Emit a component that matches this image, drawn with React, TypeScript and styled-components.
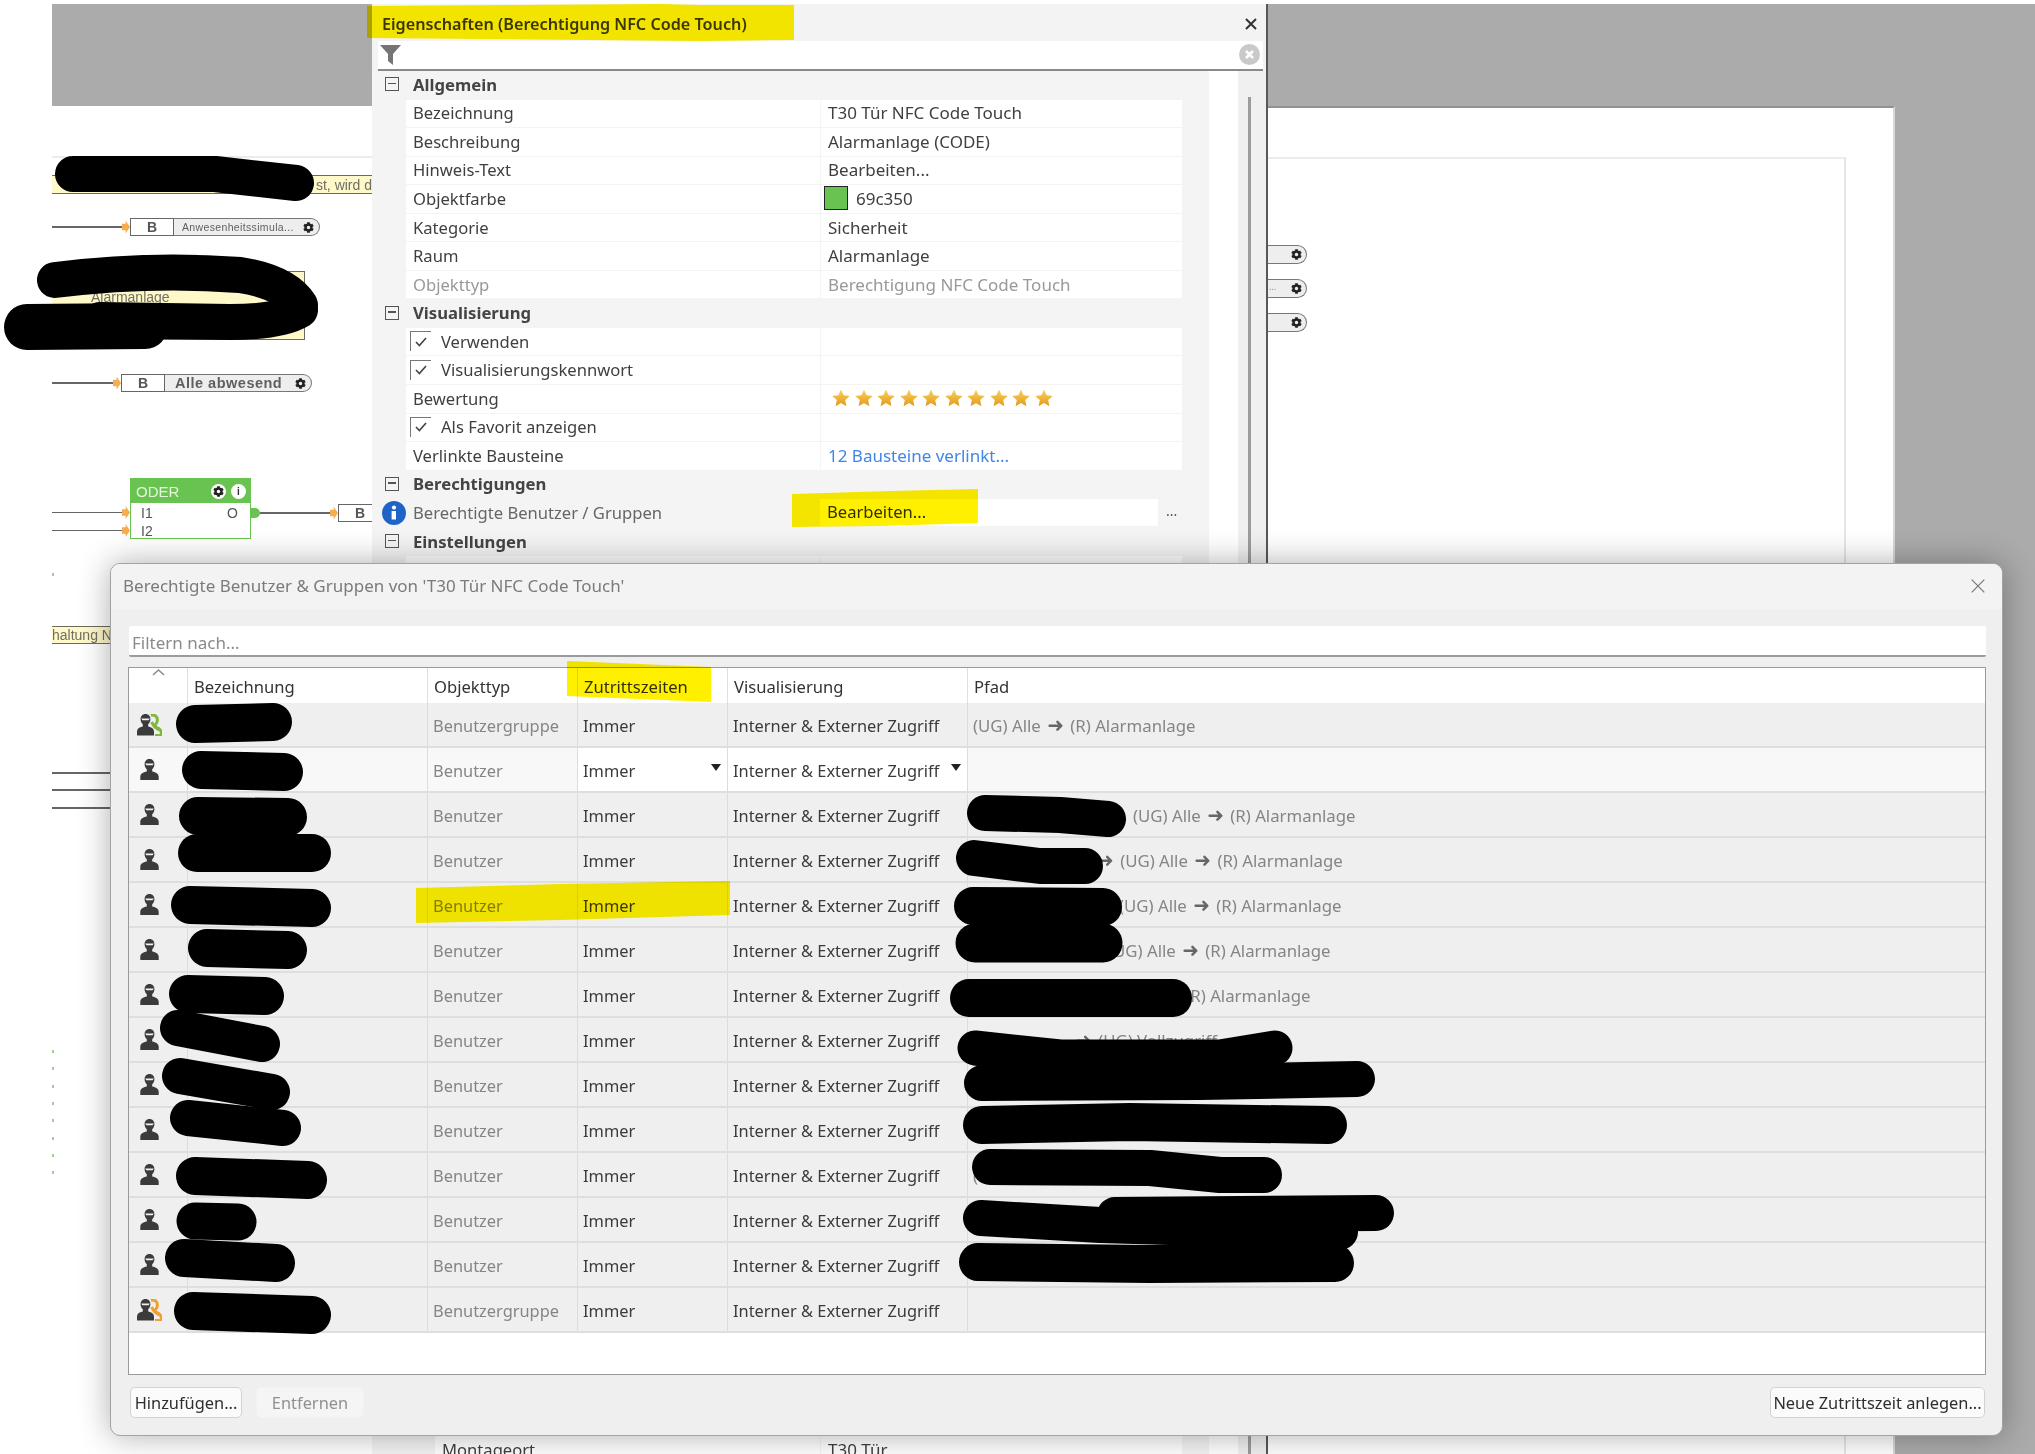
import React from 'react';
import styled, { createGlobalStyle } from 'styled-components';
import { FaCog } from 'react-icons/fa';

const UI_FONT = '"Noto Sans", "DejaVu Sans", sans-serif';

const GlobalStyle = createGlobalStyle`
  html, body {
    margin: 0;
    padding: 0;
    background: #fff;
  }
  body {
    width: 2035px;
    height: 1454px;
    overflow: hidden;
    font-family: ${UI_FONT};
    font-size: 16.4px;
    color: #333;
  }
  * { box-sizing: border-box; }
`;

const Page = styled.div`
  position: relative;
  width: 2035px;
  height: 1454px;
  overflow: hidden;
  background: #fff;
`;

const Desktop = styled.div`
  display: grid;
  grid-template-columns: 52px 320px 896px 767px;
  height: 1454px;
  padding-top: 4px;
`;

/* ---------- canvas behind the windows ---------- */

const Canvas = styled.div<{ $column: number }>`
  grid-column: ${(p) => p.$column};
  grid-row: 1;
  display: flex;
  align-items: stretch;
  padding-top: 102px;
  background: #ababab;
  overflow: hidden;
`;

const LeftPaper = styled.div`
  position: relative;
  flex: 1;
  background: #fff;
  padding-top: 50px;
`;

const RightPaper = styled.div`
  position: relative;
  width: 627px;
  background: #fff;
  border-top: 2px solid #919191;
  border-right: 2px solid #d8d8d8;
  padding: 49px 47px 0 0;
`;

const PrintFrame = styled.div<{ $right?: boolean }>`
  height: 100%;
  border-top: 2px solid #ececec;
  border-right: ${(p) => (p.$right ? '2px solid #e6e6e6' : 'none')};
`;

const Note = styled.div<{ $y: number; $w: number; $h: number; $start?: boolean; $pad?: number }>`
  position: absolute;
  left: 0;
  top: ${(p) => p.$y}px;
  width: ${(p) => p.$w}px;
  height: ${(p) => p.$h}px;
  padding: ${(p) => (p.$pad ? '17px' : '0')} 0 0 ${(p) => p.$pad ?? 0}px;
  display: flex;
  justify-content: ${(p) => (p.$start ? 'flex-start' : 'flex-end')};
  align-items: ${(p) => (p.$pad ? 'flex-start' : 'center')};
  background: #fff8c9;
  border: 1.5px solid #6b6b5c;
  border-right-width: ${(p) => (p.$w >= 320 ? 0 : 1.5)}px;
  border-left-width: 0;
  font-family: "Liberation Sans", sans-serif;
  font-size: 14px;
  color: #6f6f66;
  white-space: nowrap;
  overflow: hidden;
`;

const Chain = styled.div<{ $x: number; $y: number }>`
  position: absolute;
  left: ${(p) => p.$x}px;
  top: ${(p) => p.$y}px;
  display: flex;
  align-items: center;
`;

const Wire = styled.span<{ $w: number }>`
  display: block;
  width: ${(p) => p.$w}px;
  height: 1.5px;
  background: #666;
`;

const PinIn = styled.span`
  display: block;
  width: 8px;
  height: 13px;
  background: #f6ac52;
  clip-path: polygon(0 25%, 45% 25%, 45% 0, 100% 50%, 45% 100%, 45% 75%, 0 75%);
`;

const PinOut = styled.span`
  display: block;
  width: 9px;
  height: 10px;
  background: #69c350;
  border-radius: 0 5px 5px 0;
`;

const RefBox = styled.span<{ $w: number }>`
  display: flex;
  align-items: center;
  justify-content: center;
  width: ${(p) => p.$w}px;
  height: 18px;
  background: #fff;
  border: 1.5px solid #666;
  font-family: "Liberation Sans", sans-serif;
  font-weight: 700;
  font-size: 14px;
  color: #555;
`;

const RefLabel = styled.span<{ $w: number; $bold?: boolean }>`
  display: flex;
  align-items: center;
  justify-content: space-between;
  width: ${(p) => p.$w}px;
  height: 18px;
  padding: 0 5px 0 ${(p) => (p.$bold ? 10 : 8)}px;
  background: #eeeeee;
  border: 1.5px solid #777;
  border-left: 0;
  border-radius: 0 9px 9px 0;
  font-family: "Liberation Sans", sans-serif;
  font-weight: ${(p) => (p.$bold ? 700 : 400)};
  font-size: ${(p) => (p.$bold ? 14.5 : 10.5)}px;
  letter-spacing: ${(p) => (p.$bold ? 0.5 : 0.35)}px;
  color: #5f5f5f;
  white-space: nowrap;
`;

const Cog = styled(FaCog)`
  flex: none;
  width: 11px;
  height: 11px;
  color: #222;
`;

const LogicBlock = styled.div`
  position: absolute;
  left: 78px;
  top: 372px;
  width: 121px;
  height: 61px;
  background: #fff;
  border: 1.5px solid #69c350;
`;

const LogicHead = styled.div`
  display: flex;
  align-items: center;
  height: 24px;
  padding: 0 4px 0 5px;
  gap: 5px;
  background: #69c350;
  font-family: "Liberation Sans", sans-serif;
  font-weight: 400;
  font-size: 15px;
  color: #e6f5df;
`;

const LogicName = styled.span`
  flex: 1;
`;

const RoundBadge = styled.span`
  display: flex;
  align-items: center;
  justify-content: center;
  width: 15px;
  height: 15px;
  border-radius: 50%;
  background: #fff;
  font-size: 10px;
  font-weight: 700;
  color: #333;
`;

const LogicPorts = styled.div`
  display: grid;
  grid-template-columns: 1fr auto;
  padding: 2px 12px 0 10px;
  font-family: "Liberation Sans", sans-serif;
  font-size: 14px;
  line-height: 17.5px;
  color: #555;
`;

const GraphDot = styled.span<{ $y: number }>`
  position: absolute;
  left: 0;
  top: ${(p) => p.$y}px;
  width: 2px;
  height: 3px;
  background: #9fd08d;
`;

const Stub = styled.div<{ $y: number }>`
  position: absolute;
  left: 0;
  top: ${(p) => p.$y}px;
  display: flex;
  align-items: center;
  justify-content: space-between;
  width: 39px;
  height: 19px;
  padding: 0 4px 4px 1px;
  background: #eee;
  border: 1.5px solid #777;
  border-left: 0;
  border-radius: 0 10px 10px 0;
  font-size: 9px;
  color: #8a8a8a;
  ${Cog} { margin-top: 4px; margin-left: auto; }
`;

/* ---------- properties window ---------- */

const PropsWindow = styled.section`
  grid-column: 3;
  grid-row: 1;
  display: flex;
  flex-direction: column;
  height: 1450px;
  overflow: hidden;
  background: #f3f3f3;
  border-right: 2px solid #585858;
`;

const PropsTitle = styled.header`
  display: flex;
  align-items: center;
  justify-content: space-between;
  flex: none;
  height: 37px;
  padding: 3px 9px 0 10px;
  font-weight: 600;
  font-size: 16.2px;
  color: #3a3a3a;
`;

const CloseGlyph = styled.svg`
  width: 12px;
  height: 12px;
  stroke: #333;
  stroke-width: 2;
`;

const FilterBar = styled.div`
  display: flex;
  align-items: center;
  justify-content: space-between;
  flex: none;
  height: 30px;
  margin-left: 6px;
  margin-right: 3px;
  padding: 0 3px 1px 2px;
  background: #fff;
  border-bottom: 2px solid #8a8a8a;
`;

const PropsBody = styled.div`
  display: flex;
  flex: 1;
  min-height: 0;
`;

const PropsGrid = styled.div`
  flex: none;
  width: 837px;
  padding-right: 27px;
  background: #f4f4f4;
  font-size: 16.6px;
`;

const WhiteGap = styled.div`
  flex: none;
  width: 29px;
  background: #fff;
`;

const ScrollTrack = styled.div`
  flex: 1;
  display: flex;
  justify-content: center;
  padding: 26px 5px 0 0;
  background: #f0f0f0;
`;

const ScrollThumb = styled.div`
  width: 3px;
  height: 100%;
  background: #9c9c9c;
`;

const SectionRow = styled.div`
  display: flex;
  align-items: center;
  height: 28.55px;
  padding: 0 0 2px 13px;
  font-weight: 700;
  font-size: 16.7px;
  color: #444;
`;

const Toggle = styled.span`
  position: relative;
  flex: none;
  width: 14px;
  height: 14px;
  margin-right: 14px;
  border: 1.5px solid #555;
  &::after {
    content: '';
    position: absolute;
    left: 2px;
    right: 2px;
    top: 4.5px;
    height: 1.5px;
    background: #555;
  }
`;

const PropRow = styled.div<{ $bare?: boolean; $indent?: number }>`
  display: grid;
  grid-template-columns: ${(p) => 414 - (p.$indent ?? 0)}px 1fr;
  height: 28.55px;
  margin-left: ${(p) => 34 + (p.$indent ?? 0)}px;
  background: ${(p) => (p.$bare ? 'transparent' : '#fff')};
  border-bottom: ${(p) => (p.$bare ? 'none' : '1px solid #f4f4f4')};
`;

const PropLabel = styled.div<{ $muted?: boolean; $tone?: string }>`
  display: flex;
  align-items: center;
  padding: 0 0 1px 7px;
  color: ${(p) => p.$tone ?? (p.$muted ? '#999' : '#3f3f3f')};
  white-space: nowrap;
`;

const CheckBox = styled.span`
  display: flex;
  align-items: center;
  justify-content: center;
  flex: none;
  width: 21px;
  height: 20px;
  margin: 0 10px 0 -3px;
  border-top: 1.5px solid #777;
  border-left: 1.5px solid #777;
`;

const PropValue = styled.div<{ $muted?: boolean; $link?: boolean }>`
  display: flex;
  align-items: center;
  gap: 6px;
  padding: 0 0 1px 7px;
  border-left: 1px solid #f4f4f4;
  font-size: 17px;
  color: ${(p) => (p.$link ? '#3f86e8' : p.$muted ? '#999' : '#3f3f3f')};
  white-space: nowrap;
`;

const Swatch = styled.span<{ $color: string }>`
  width: 24px;
  height: 24px;
  margin-left: -4px;
  margin-right: 2px;
  background: ${(p) => p.$color};
  border: 1.5px solid #222;
`;

const Stars = styled.div`
  display: flex;
  gap: 4.5px;
  margin-left: 4px;
`;

const EditCell = styled.div`
  display: flex;
  align-items: flex-start;
`;

const EditField = styled.div`
  display: flex;
  align-items: center;
  width: 338px;
  height: 27px;
  padding: 0 0 2px 7px;
  background: #fff;
  font-size: 16.6px;
  color: #333;
`;

const EditDots = styled.span`
  margin-left: 8px;
  margin-top: 2px;
  font-size: 14px;
  color: #555;
`;

const HiddenRows = styled.div`
  height: 851px;
`;

/* ---------- dialog ---------- */

const Dialog = styled.section`
  position: absolute;
  left: 110px;
  top: 563px;
  width: 1893px;
  height: 873px;
  display: flex;
  flex-direction: column;
  background: #efefef;
  border: 1.5px solid #a3a3a3;
  border-radius: 10px;
  box-shadow: 0 0 32px rgba(0, 0, 0, 0.32);
  overflow: hidden;
`;

const DialogTitle = styled.header`
  display: flex;
  align-items: center;
  justify-content: space-between;
  flex: none;
  height: 45px;
  padding: 0 17px 2px 12px;
  background: #f3f3f3;
  color: #7b7b7b;
  font-size: 17px;
`;

const DialogBody = styled.div`
  display: flex;
  flex: 1;
  flex-direction: column;
  padding: 17px 16px 16px 17px;
`;

const FilterInput = styled.div`
  display: flex;
  align-items: center;
  flex: none;
  height: 31px;
  margin: 0 0 10px 1px;
  padding: 4px 3px 0;
  background: #fff;
  border-bottom: 2px solid #9b9b9b;
  border-radius: 2px;
  font-size: 17px;
  color: #8a8a8a;
`;

const Table = styled.div`
  flex: none;
  display: flex;
  flex-direction: column;
  height: 708px;
  background: #fff;
  border: 1.5px solid #9a9a9a;
`;

const TableHead = styled.div`
  display: grid;
  grid-template-columns: 58px 240px 150px 150px 240px 1fr;
  flex: none;
  height: 35px;
`;

const HeadCell = styled.div`
  display: flex;
  align-items: center;
  padding: 2px 0 0 6px;
  border-left: 1px solid #e0e0e0;
  font-size: 16.6px;
  color: #333;
  &:first-child {
    border-left: 0;
    align-items: flex-start;
    justify-content: center;
    padding: 1px 0 0;
  }
`;

const TableRow = styled.div`
  display: grid;
  grid-template-columns: 58px 240px 150px 150px 240px 1fr;
  flex: none;
  height: 45px;
  border-bottom: 2px solid #dedede;
`;

const Cell = styled.div<{ $tone?: string; $bg?: string }>`
  display: flex;
  align-items: center;
  justify-content: space-between;
  padding: 2px 6px 0 5px;
  background: ${(p) => p.$bg ?? '#efefef'};
  border-left: 1.5px solid #dcdcdc;
  color: ${(p) => p.$tone ?? '#3a3a3a'};
  white-space: nowrap;
  &:first-child {
    justify-content: center;
    padding: 0 17px 0 0;
    border-left: 0;
  }
`;

const PathText = styled.span<{ $indent: number }>`
  margin-left: ${(p) => p.$indent}px;
  font-size: 16.8px;
`;

const PathArrow = styled.span`
  margin: 0 2px;
  font-family: "DejaVu Sans", sans-serif;
  font-size: 20px;
  line-height: 1;
  color: #666;
`;

const DropCaret = styled.span`
  width: 0;
  height: 0;
  margin-bottom: 6px;
  border-left: 5px solid transparent;
  border-right: 5px solid transparent;
  border-top: 7px solid #222;
`;

const DialogFooter = styled.footer`
  display: flex;
  align-items: center;
  gap: 14px;
  margin-top: 12px;
  padding-left: 2px;
  padding-right: 1px;
`;

const FooterButton = styled.div<{ $disabled?: boolean; $w: number; $push?: boolean }>`
  display: flex;
  align-items: center;
  justify-content: center;
  width: ${(p) => p.$w}px;
  height: 31px;
  margin-left: ${(p) => (p.$push ? 'auto' : 0)};
  background: ${(p) => (p.$disabled ? '#f5f5f5' : '#fbfbfb')};
  border: 1.5px solid ${(p) => (p.$disabled ? '#f2f2f2' : '#d2d2d2')};
  border-radius: 5px;
  color: ${(p) => (p.$disabled ? '#909090' : '#2e2e2e')};
  white-space: nowrap;
`;

const MarkerLayer = styled.svg`
  position: absolute;
  left: 0;
  top: 0;
  width: 2035px;
  height: 1454px;
  mix-blend-mode: multiply;
  pointer-events: none;
`;

const ScribbleLayer = styled.svg`
  position: absolute;
  left: 0;
  top: 0;
  width: 2035px;
  height: 1454px;
  pointer-events: none;
`;

/* ---------- small drawings ---------- */

const FilterFunnel = () => (
  <svg width="21" height="22" viewBox="0 0 21 22">
    <path d="M0 1H21L13 10V21L8 17V10Z" fill="#757575" />
  </svg>
);

const ClearCircle = () => (
  <svg width="21" height="21" viewBox="0 0 21 21">
    <circle cx="10.5" cy="10.5" r="10.5" fill="#c9c9c9" />
    <path d="M7 7L14 14M14 7L7 14" stroke="#fff" strokeWidth="2.6" />
  </svg>
);

const InfoDisc = () => (
  <svg width="24" height="24" viewBox="0 0 24 24" style={{ marginLeft: -31, marginRight: 7, flex: 'none' }}>
    <circle cx="12" cy="12" r="12" fill="#1f63c9" />
    <circle cx="12" cy="6.5" r="2.1" fill="#fff" />
    <path d="M9.6 10H14V18.5H9.6Z" fill="#fff" />
  </svg>
);

const Star = () => (
  <svg width="18" height="18" viewBox="0 0 18 18">
    <defs>
      <linearGradient id="star-fill" x1="0" y1="0" x2="0" y2="1">
        <stop offset="0" stopColor="#f9d25a" />
        <stop offset="1" stopColor="#e19a1c" />
      </linearGradient>
    </defs>
    <path d="M9 .6l2.6 5.6 6.1.7-4.5 4.2 1.2 6.1L9 13.9 3.6 17.2l1.2-6.1L.3 6.9l6.1-.7z" fill="url(#star-fill)" />
  </svg>
);

const TickMark = () => (
  <svg width="12" height="10" viewBox="0 0 12 10">
    <path d="M1 5l3.4 3.6L11 1" fill="none" stroke="#444" strokeWidth="1.6" />
  </svg>
);

const SortChevron = () => (
  <svg width="13" height="7" viewBox="0 0 13 7">
    <path d="M1 6L6.5 1L12 6" fill="none" stroke="#8c8c8c" strokeWidth="1.5" />
  </svg>
);

const UserGlyph = () => (
  <svg width="19" height="21" viewBox="0 0 19 21">
    <path d="M9.5 0C6.5 0 4.6 2.2 4.6 5.2C4.6 7.3 5.4 9 6.8 10.2V12.4C3 13.2 .3 14.8 .3 17.5V21H18.7V17.5C18.7 14.8 16 13.2 12.2 12.4V10.2C13.6 9 14.4 7.3 14.4 5.2C14.4 2.2 12.5 0 9.5 0Z" fill="#3b3b3b" />
    <path d="M5.2 4.6H13.8L12.6 6.2H6.4Z" fill="#f2f2f2" />
  </svg>
);

const GroupGlyph = ({ accent }: { accent: string }) => (
  <svg width="25" height="22" viewBox="0 0 25 22">
    <path d="M14 1.5C17 .2 20.4 2.2 20.4 6C20.4 8.2 19.4 9.8 18.2 10.8V13C21.4 14 24.4 16 24.4 19V21.5H18" fill="none" stroke={accent} strokeWidth="3" />
    <path d="M14.5 8L17 12L22 16" fill="none" stroke={accent} strokeWidth="3" />
    <path d="M8.5 0C5.5 0 3.6 2.2 3.6 5.2C3.6 7.3 4.4 9 5.8 10.2V12.4C2 13.2 0 14.8 0 17.5V21.5H17V17.5C17 14.8 14.8 13.2 11.2 12.4V10.2C12.6 9 13.4 7.3 13.4 5.2C13.4 2.2 11.5 0 8.5 0Z" fill="#3b3b3b" />
    <path d="M4.2 4.6H12.8L11.6 6.2H5.4Z" fill="#f2f2f2" />
  </svg>
);

const CloseThin = () => (
  <svg width="14" height="14" viewBox="0 0 14 14">
    <path d="M.7 .7L13.3 13.3M13.3 .7L.7 13.3" stroke="#777" strokeWidth="1.2" />
  </svg>
);

/* ---------- data ---------- */

const ARROW = '\u279C';

type MemberRow = {
  icon: 'user' | 'green' | 'orange';
  kind: string;
  path?: { text: string; indent: number };
  editing?: boolean;
};

const ALARM_PATH = '(UG) Alle | (R) Alarmanlage';

const members: MemberRow[] = [
  { icon: 'green', kind: 'Benutzergruppe', path: { text: ALARM_PATH, indent: 0 } },
  { icon: 'user', kind: 'Benutzer', editing: true },
  { icon: 'user', kind: 'Benutzer', path: { text: ALARM_PATH, indent: 160 } },
  { icon: 'user', kind: 'Benutzer', path: { text: '| ' + ALARM_PATH, indent: 122 } },
  { icon: 'user', kind: 'Benutzer', path: { text: ALARM_PATH, indent: 146 } },
  { icon: 'user', kind: 'Benutzer', path: { text: ALARM_PATH, indent: 135 } },
  { icon: 'user', kind: 'Benutzer', path: { text: ALARM_PATH, indent: 115 } },
  { icon: 'user', kind: 'Benutzer', path: { text: '| (UG) Vollzugriff', indent: 100 } },
  { icon: 'user', kind: 'Benutzer' },
  { icon: 'user', kind: 'Benutzer' },
  { icon: 'user', kind: 'Benutzer', path: { text: '(UG)', indent: 0 } },
  { icon: 'user', kind: 'Benutzer' },
  { icon: 'user', kind: 'Benutzer' },
  { icon: 'orange', kind: 'Benutzergruppe' },
];

const GENERAL_ROWS: { label: string; value: string }[] = [
  { label: 'Bezeichnung', value: 'T30 Tür NFC Code Touch' },
  { label: 'Beschreibung', value: 'Alarmanlage (CODE)' },
  { label: 'Hinweis-Text', value: 'Bearbeiten...' },
];

const SCRIBBLES: { d: string; w: number }[] = [
  { d: 'M73 174 L215 174 L296 183', w: 36 },
  { d: 'M55 280 Q150 268 240 275 Q285 282 300 305', w: 36 },
  { d: 'M300 310 Q280 322 230 322 L100 320', w: 36 },
  { d: 'M27 327 L145 326', w: 46 },
  { d: 'M195 724 L273 722', w: 38 },
  { d: 'M201 770 L284 772', w: 38 },
  { d: 'M198 816 L288 817', w: 38 },
  { d: 'M197 853 L312 853', w: 38 },
  { d: 'M190 905 L312 908', w: 38 },
  { d: 'M207 948 L288 950', w: 38 },
  { d: 'M188 994 L265 996', w: 38 },
  { d: 'M178 1028 L262 1044', w: 36 },
  { d: 'M180 1076 L272 1092', w: 36 },
  { d: 'M188 1118 L283 1128', w: 36 },
  { d: 'M195 1176 L308 1180', w: 38 },
  { d: 'M195 1221 L238 1222', w: 37 },
  { d: 'M184 1258 L276 1263', w: 38 },
  { d: 'M193 1311 L312 1315', w: 38 },
  { d: 'M985 813 L1060 815 L1108 819', w: 36 },
  { d: 'M974 858 L1040 866 L1085 866', w: 36 },
  { d: 'M973 906 L1103 907', w: 38 },
  { d: 'M975 943 L1103 943', w: 39 },
  { d: 'M969 998 L1173 998', w: 38 },
  { d: 'M975 1048 L1060 1057 L1220 1057 L1275 1048', w: 35 },
  { d: 'M982 1083 L1200 1082 L1357 1079', w: 36 },
  { d: 'M982 1125 L1130 1122 L1328 1125', w: 38 },
  { d: 'M990 1167 L1150 1168 L1220 1175 L1264 1175', w: 36 },
  { d: 'M1115 1215 L1376 1213', w: 36 },
  { d: 'M981 1218 L1100 1225 L1340 1232', w: 36 },
  { d: 'M978 1262 L1150 1264 L1335 1263', w: 38 },
];

const MARKERS = [
  'M367 6 L660 4 L700 5 L794 5 L794 40 L700 41 L367 38 Z',
  'M792 494 L890 491 L978 489 L978 523 L880 526 L792 527 Z',
  'M567 661 L711 667 L711 702 L567 696 Z',
  'M416 888 L560 884 L730 881 L730 915 L560 920 L416 923 Z',
];

const MemberIcon = ({ icon }: { icon: MemberRow['icon'] }) => {
  if (icon === 'user') return <UserGlyph />;
  return <GroupGlyph accent={icon === 'green' ? '#7fb73f' : '#f0a030'} />;
};

const PathLabel = ({ text }: { text: string }) => {
  const parts = text.split('|');
  return (
    <>
      {parts.map((part, i) => (
        <React.Fragment key={i}>
          {i > 0 && <PathArrow>{ARROW}</PathArrow>}
          {part}
        </React.Fragment>
      ))}
    </>
  );
};

const App = () => {
  return (
    <Page>
      <GlobalStyle />
      <Desktop>
        <Canvas $column={2}>
          <LeftPaper>
            <PrintFrame />
            <Note $y={69} $w={320} $h={19}>st, wird d</Note>
            <Chain $x={0} $y={112}>
              <Wire $w={70} />
              <PinIn />
              <RefBox $w={44}>B</RefBox>
              <RefLabel $w={146}>Anwesenheitssimula...<Cog /></RefLabel>
            </Chain>
            <Note $y={165} $w={253} $h={69} $start $pad={39}>Alarmanlage</Note>
            <Chain $x={0} $y={268}>
              <Wire $w={61} />
              <PinIn />
              <RefBox $w={44}>B</RefBox>
              <RefLabel $w={147} $bold>Alle abwesend<Cog /></RefLabel>
            </Chain>
            <Chain $x={0} $y={400}>
              <Wire $w={70} />
              <PinIn />
            </Chain>
            <Chain $x={0} $y={418}>
              <Wire $w={70} />
              <PinIn />
            </Chain>
            <LogicBlock>
              <LogicHead>
                <LogicName>ODER</LogicName>
                <RoundBadge><Cog /></RoundBadge>
                <RoundBadge>i</RoundBadge>
              </LogicHead>
              <LogicPorts>
                <span>I1</span>
                <span>O</span>
                <span>I2</span>
              </LogicPorts>
            </LogicBlock>
            <Chain $x={199} $y={398}>
              <PinOut />
              <Wire $w={70} />
              <PinIn />
              <RefBox $w={44}>B</RefBox>
            </Chain>
            <Note $y={520} $w={320} $h={18} $start>haltung Nachricht</Note>
            <Chain $x={0} $y={666}><Wire $w={58} /></Chain>
            <Chain $x={0} $y={683}><Wire $w={58} /></Chain>
            <Chain $x={0} $y={701}><Wire $w={58} /></Chain>
            <GraphDot $y={467} />
            {[944, 961, 979, 996, 1013, 1031, 1048, 1065].map((y) => (
              <GraphDot key={y} $y={y} />
            ))}
          </LeftPaper>
        </Canvas>

        <PropsWindow>
          <PropsTitle>
            Eigenschaften (Berechtigung NFC Code Touch)
            <CloseGlyph viewBox="0 0 12 12">
              <path d="M1 1L11 11M11 1L1 11" />
            </CloseGlyph>
          </PropsTitle>
          <FilterBar>
            <FilterFunnel />
            <ClearCircle />
          </FilterBar>
          <PropsBody>
            <PropsGrid>
              <SectionRow><Toggle />Allgemein</SectionRow>
              {GENERAL_ROWS.map((row) => (
                <PropRow key={row.label}>
                  <PropLabel>{row.label}</PropLabel>
                  <PropValue>{row.value}</PropValue>
                </PropRow>
              ))}
              <PropRow>
                <PropLabel>Objektfarbe</PropLabel>
                <PropValue><Swatch $color="#69c350" />69c350</PropValue>
              </PropRow>
              <PropRow>
                <PropLabel>Kategorie</PropLabel>
                <PropValue>Sicherheit</PropValue>
              </PropRow>
              <PropRow>
                <PropLabel>Raum</PropLabel>
                <PropValue>Alarmanlage</PropValue>
              </PropRow>
              <PropRow>
                <PropLabel $muted>Objekttyp</PropLabel>
                <PropValue $muted>Berechtigung NFC Code Touch</PropValue>
              </PropRow>

              <SectionRow><Toggle />Visualisierung</SectionRow>
              <PropRow>
                <PropLabel><CheckBox><TickMark /></CheckBox>Verwenden</PropLabel>
                <PropValue />
              </PropRow>
              <PropRow>
                <PropLabel><CheckBox><TickMark /></CheckBox>Visualisierungskennwort</PropLabel>
                <PropValue />
              </PropRow>
              <PropRow>
                <PropLabel>Bewertung</PropLabel>
                <PropValue>
                  <Stars>
                    {Array.from({ length: 10 }, (_, i) => <Star key={i} />)}
                  </Stars>
                </PropValue>
              </PropRow>
              <PropRow>
                <PropLabel><CheckBox><TickMark /></CheckBox>Als Favorit anzeigen</PropLabel>
                <PropValue />
              </PropRow>
              <PropRow>
                <PropLabel>Verlinkte Bausteine</PropLabel>
                <PropValue $link>12 Bausteine verlinkt...</PropValue>
              </PropRow>

              <SectionRow><Toggle />Berechtigungen</SectionRow>
              <PropRow $bare>
                <PropLabel $tone="#666"><InfoDisc />Berechtigte Benutzer / Gruppen</PropLabel>
                <EditCell>
                  <EditField>Bearbeiten...</EditField>
                  <EditDots>...</EditDots>
                </EditCell>
              </PropRow>

              <SectionRow><Toggle />Einstellungen</SectionRow>
              <PropRow>
                <PropLabel>Zusammengesetzter Name</PropLabel>
                <PropValue>T30 Tür NFC Code Touch (T30 Tür)</PropValue>
              </PropRow>
              <HiddenRows />
              <PropRow $indent={29}>
                <PropLabel>Montageort</PropLabel>
                <PropValue>T30 Tür</PropValue>
              </PropRow>
            </PropsGrid>
            <WhiteGap />
            <ScrollTrack><ScrollThumb /></ScrollTrack>
          </PropsBody>
        </PropsWindow>

        <Canvas $column={4}>
          <RightPaper>
            <PrintFrame $right />
            <Stub $y={137}><Cog /></Stub>
            <Stub $y={171}>...<Cog /></Stub>
            <Stub $y={205}><Cog /></Stub>
          </RightPaper>
        </Canvas>
      </Desktop>

      <Dialog>
        <DialogTitle>
          Berechtigte Benutzer &amp; Gruppen von 'T30 Tür NFC Code Touch'
          <CloseThin />
        </DialogTitle>
        <DialogBody>
          <FilterInput>Filtern nach...</FilterInput>
          <Table>
            <TableHead>
              <HeadCell><SortChevron /></HeadCell>
              <HeadCell>Bezeichnung</HeadCell>
              <HeadCell>Objekttyp</HeadCell>
              <HeadCell>Zutrittszeiten</HeadCell>
              <HeadCell>Visualisierung</HeadCell>
              <HeadCell>Pfad</HeadCell>
            </TableHead>
            {members.map((row, i) => {
              const base = row.editing ? '#f8f8f8' : undefined;
              const open = row.editing ? '#fff' : undefined;
              return (
                <TableRow key={i}>
                  <Cell $bg={base}><MemberIcon icon={row.icon} /></Cell>
                  <Cell $bg={base} />
                  <Cell $bg={base} $tone="#858585">{row.kind}</Cell>
                  <Cell $bg={open}>Immer{row.editing && <DropCaret />}</Cell>
                  <Cell $bg={open}>Interner &amp; Externer Zugriff{row.editing && <DropCaret />}</Cell>
                  <Cell $bg={base} $tone="#858585">
                    {row.path && (
                      <PathText $indent={row.path.indent}><PathLabel text={row.path.text} /></PathText>
                    )}
                  </Cell>
                </TableRow>
              );
            })}
          </Table>
          <DialogFooter>
            <FooterButton $w={112}>Hinzufügen...</FooterButton>
            <FooterButton $w={108} $disabled>Entfernen</FooterButton>
            <FooterButton $w={215} $push>Neue Zutrittszeit anlegen...</FooterButton>
          </DialogFooter>
        </DialogBody>
      </Dialog>

      <MarkerLayer viewBox="0 0 2035 1454">
        {MARKERS.map((d) => <path key={d} d={d} fill="#fff000" />)}
      </MarkerLayer>
      <ScribbleLayer viewBox="0 0 2035 1454">
        {SCRIBBLES.map((s) => (
          <path key={s.d} d={s.d} fill="none" stroke="#000" strokeWidth={s.w} strokeLinecap="round" strokeLinejoin="round" />
        ))}
      </ScribbleLayer>
    </Page>
  );
};

export default App;
